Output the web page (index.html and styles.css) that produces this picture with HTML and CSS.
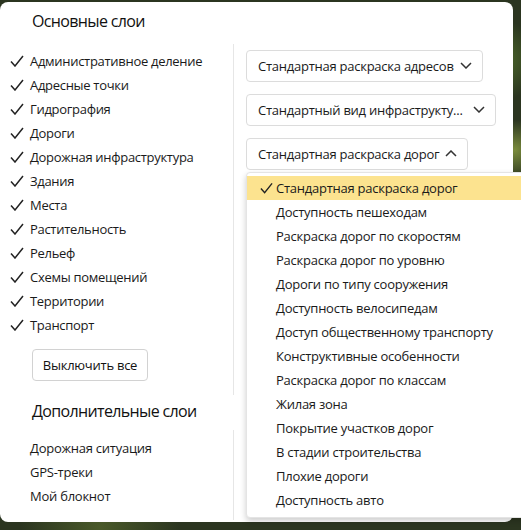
FILE: index.html
```html
<!DOCTYPE html>
<html lang="ru">
<head>
<meta charset="utf-8">
<title>Слои</title>
<link rel="stylesheet" href="styles.css">
</head>
<body>
<div class="map">
  <div class="panel">
    <h2 class="title title-main">Основные слои</h2>
    <div class="empty-cell"></div>

    <div class="left-main">
      <ul class="checklist">
        <li><svg class="check" viewBox="0 0 14 12"><path d="M1 6.5 L5 11 L13 1"/></svg>Административное деление</li>
        <li><svg class="check" viewBox="0 0 14 12"><path d="M1 6.5 L5 11 L13 1"/></svg>Адресные точки</li>
        <li><svg class="check" viewBox="0 0 14 12"><path d="M1 6.5 L5 11 L13 1"/></svg>Гидрография</li>
        <li><svg class="check" viewBox="0 0 14 12"><path d="M1 6.5 L5 11 L13 1"/></svg>Дороги</li>
        <li><svg class="check" viewBox="0 0 14 12"><path d="M1 6.5 L5 11 L13 1"/></svg>Дорожная инфраструктура</li>
        <li><svg class="check" viewBox="0 0 14 12"><path d="M1 6.5 L5 11 L13 1"/></svg>Здания</li>
        <li><svg class="check" viewBox="0 0 14 12"><path d="M1 6.5 L5 11 L13 1"/></svg>Места</li>
        <li><svg class="check" viewBox="0 0 14 12"><path d="M1 6.5 L5 11 L13 1"/></svg>Растительность</li>
        <li><svg class="check" viewBox="0 0 14 12"><path d="M1 6.5 L5 11 L13 1"/></svg>Рельеф</li>
        <li><svg class="check" viewBox="0 0 14 12"><path d="M1 6.5 L5 11 L13 1"/></svg>Схемы помещений</li>
        <li><svg class="check" viewBox="0 0 14 12"><path d="M1 6.5 L5 11 L13 1"/></svg>Территории</li>
        <li><svg class="check" viewBox="0 0 14 12"><path d="M1 6.5 L5 11 L13 1"/></svg>Транспорт</li>
      </ul>
      <button class="btn">Выключить все</button>
    </div>

    <div class="right-main">
      <div class="select w1"><span class="sel-text">Стандартная раскраска адресов</span><svg class="chev" viewBox="0 0 12 7"><path d="M1 1 L6 6 L11 1"/></svg></div>
      <div class="select w2"><span class="sel-text">Стандартный вид инфраструкту...</span><svg class="chev" viewBox="0 0 12 7"><path d="M1 1 L6 6 L11 1"/></svg></div>
      <div class="select w3 open"><span class="sel-text">Стандартная раскраска дорог</span><svg class="chev" viewBox="0 0 12 7"><path d="M1 6 L6 1 L11 6"/></svg></div>
    </div>

    <h2 class="title title-extra">Дополнительные слои</h2>
    <div class="empty-cell"></div>

    <ul class="extra-list">
      <li>Дорожная ситуация</li>
      <li>GPS-треки</li>
      <li>Мой блокнот</li>
    </ul>
    <div class="right-extra"></div>
  </div>

  <ul class="menu">
    <li class="active"><svg class="mcheck" viewBox="0 0 14 12"><path d="M1 6.5 L5 11 L13 1"/></svg>Стандартная раскраска дорог</li>
    <li>Доступность пешеходам</li>
    <li>Раскраска дорог по скоростям</li>
    <li>Раскраска дорог по уровню</li>
    <li>Дороги по типу сооружения</li>
    <li>Доступность велосипедам</li>
    <li>Доступ общественному транспорту</li>
    <li>Конструктивные особенности</li>
    <li>Раскраска дорог по классам</li>
    <li>Жилая зона</li>
    <li>Покрытие участков дорог</li>
    <li>В стадии строительства</li>
    <li>Плохие дороги</li>
    <li>Доступность авто</li>
  </ul>
</div>
</body>
</html>
```

FILE: styles.css
```css
* { box-sizing: border-box; }
html, body {
  margin: 0;
  padding: 0;
  width: 521px;
  height: 530px;
  overflow: hidden;
}
body {
  font-family: "Open Sans", "Noto Sans", sans-serif;
  font-size: 13px;
  letter-spacing: -0.25px;
  color: #1a1a1a;
}
.map {
  position: relative;
  width: 521px;
  height: 530px;
  padding-top: 2px;
  background:
    radial-gradient(circle at 500px 60px, #4d6a2a 0, transparent 40px),
    radial-gradient(circle at 515px 150px, #7a8c3c 0, transparent 30px),
    radial-gradient(circle at 100px 528px, #4a5a2a 0, transparent 80px),
    #2b3520;
}
.panel {
  width: 513px;
  height: 520px;
  background: #fff;
  border-radius: 8px;
  display: grid;
  grid-template-columns: 233px 1fr;
  grid-template-rows: 47px 346px 35px 1fr;
}
.title {
  margin: 0;
  font-weight: 400;
  font-size: 16px;
  letter-spacing: -0.65px;
  color: #111;
  padding-left: 32px;
}
.title-main { padding-top: 8px; }
.title-extra { padding-top: 5px; }

.left-main { padding-left: 10px; }
.checklist {
  list-style: none;
  margin: 0;
  padding: 0;
}
.checklist li {
  height: 24px;
  display: flex;
  align-items: center;
  white-space: nowrap;
  letter-spacing: -0.3px;
  padding-bottom: 1px;
}
.check {
  width: 14px;
  height: 12px;
  margin-right: 6px;
  margin-top: 1px;
  flex: none;
}
.check path, .mcheck path {
  fill: none;
  stroke: #222;
  stroke-width: 1.5;
}
.btn {
  margin: 12px 0 0 22px;
  height: 32px;
  width: 116px;
  border: 1px solid #d2d2d2;
  border-radius: 4px;
  background: #fff;
  font-family: inherit;
  font-size: 13px;
  letter-spacing: -0.25px;
  color: #111;
  padding: 0 0 1px;
}

.right-main {
  margin-top: -5px;
  border-left: 1px solid #e6e6e6;
  padding: 6px 0 0 12px;
  display: flex;
  flex-direction: column;
  align-items: flex-start;
  gap: 12px;
}
.select {
  height: 32px;
  border: 1px solid #dcdcdc;
  border-radius: 4px;
  display: flex;
  align-items: center;
  justify-content: space-between;
  padding: 0 10px 1px 11px;
  white-space: nowrap;
}
.w1 { width: 237px; }
.w2 { width: 250px; }
.w3 { width: 222px; }
.chev {
  width: 12px;
  height: 7px;
  flex: none;
}
.chev path {
  fill: none;
  stroke: #333;
  stroke-width: 1.5;
}

.extra-list {
  list-style: none;
  margin: 0;
  padding: 6px 0 0 30px;
}
.extra-list li {
  height: 24px;
  display: flex;
  align-items: center;
  padding-bottom: 1px;
}
.right-extra {
  border-left: 1px solid #e6e6e6;
  margin-bottom: 2px;
}

.menu {
  position: absolute;
  left: 246px;
  top: 172px;
  width: 285px;
  height: 346px;
  margin: 0;
  padding: 3px 0 0;
  list-style: none;
  background: #fff;
  border: 1px solid #e4e4e4;
  border-radius: 4px;
  box-shadow: 0 3px 6px rgba(0, 0, 0, 0.2);
}
.menu li {
  height: 24px;
  display: flex;
  align-items: center;
  padding-left: 29px;
  padding-bottom: 1px;
  white-space: nowrap;
}
.menu li.active {
  background: #fce38f;
  padding-left: 13px;
}
.mcheck {
  width: 13px;
  height: 12px;
  margin-right: 3px;
  margin-top: 1px;
  flex: none;
}
```
